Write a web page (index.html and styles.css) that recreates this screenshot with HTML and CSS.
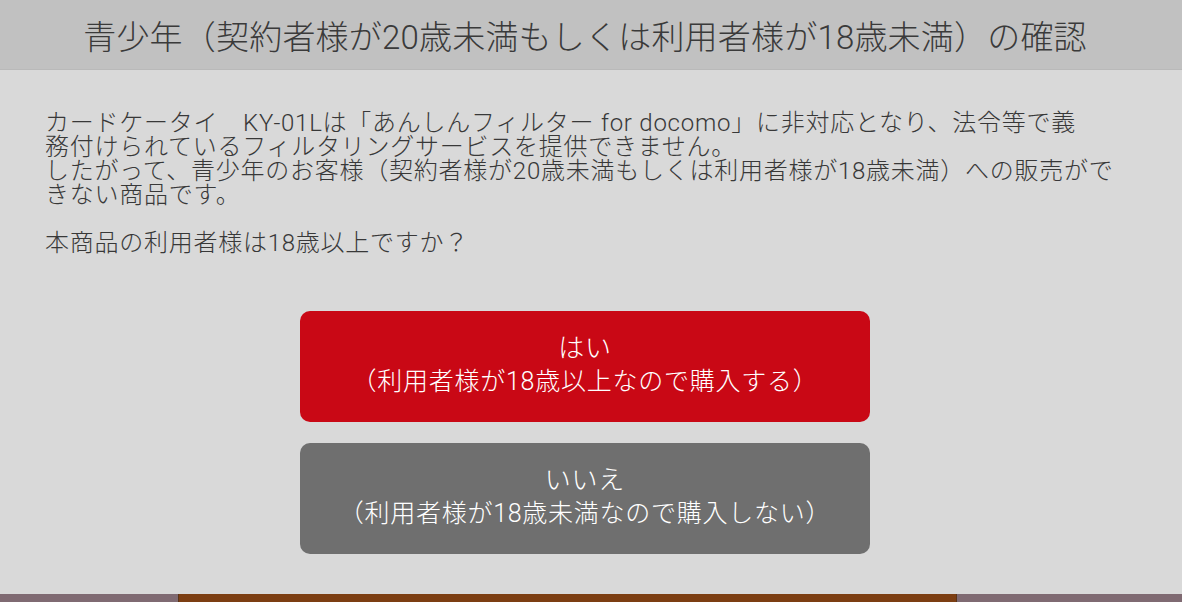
FILE: index.html
```html
<!DOCTYPE html>
<html lang="ja">
<head>
    <meta charset="UTF-8">
    <meta name="viewport" content="width=device-width, initial-scale=1.0">
    <title>青少年の確認</title>
    <link rel="stylesheet" href="styles.css">
</head>
<body>

<div class="page">
    <header class="title-bar">
        <h1>青少年（契約者様が20歳未満もしくは利用者様が18歳未満）の確認</h1>
    </header>

    <main class="content">
        <!-- 改行位置は端末表示に合わせて固定 -->
        <p class="notice">カードケータイ　KY-01Lは「あんしんフィルター for docomo」に非対応となり、法令等で義<br>務付けられているフィルタリングサービスを提供できません。<br>したがって、青少年のお客様（契約者様が20歳未満もしくは利用者様が18歳未満）への販売がで<br>きない商品です。</p>
        <p class="notice">本商品の利用者様は18歳以上ですか？</p>

        <div class="choices">
            <button class="choice choice-yes">
                <span class="choice-main">はい</span>
                <span class="choice-sub">（利用者様が18歳以上なので購入する）</span>
            </button>
            <button class="choice choice-no">
                <span class="choice-main">いいえ</span>
                <span class="choice-sub">（利用者様が18歳未満なので購入しない）</span>
            </button>
        </div>
    </main>

    <footer class="bottom-bar">
        <div class="bottom-tab"></div>
    </footer>
</div>

</body>
</html>
```

FILE: styles.css
```css
body {
    margin: 0;
    padding: 0;
    background-color: #d9d9d9;
    color: #383838;
    font-family: Roboto, "Noto Sans CJK JP", sans-serif;
    font-weight: 300;
}

.page {
    display: flex;
    flex-direction: column;
    height: 100vh;
}

.title-bar {
    background-color: #c1c1c1;
    border-bottom: 1px solid #b9b9b9;
    height: 69px;
    padding-right: 12px;
    display: flex;
    align-items: center;
    justify-content: center;
}

.title-bar h1 {
    margin: 0;
    font-size: 33px;
    font-weight: 300;
    color: #3a3a3a;
    letter-spacing: 0.2px;
}

.content {
    flex: 1;
    padding: 41px 57px 0 45px;
}

.notice {
    margin: 0 0 24px 0;
    font-size: 24px;
    line-height: 24px;
    letter-spacing: 0.75px;
    white-space: nowrap;
}

.choices {
    display: flex;
    flex-direction: column;
    align-items: center;
    gap: 21px;
    margin-top: 56px;
}

.choice {
    width: 570px;
    height: 111px;
    border: none;
    border-radius: 10px;
    color: #ffffff;
    font-family: inherit;
    font-weight: 300;
    display: flex;
    flex-direction: column;
    align-items: center;
    justify-content: center;
    padding: 0 0 4px 0;
    cursor: pointer;
}

.choice-yes {
    background-color: #c90815;
}

.choice-no {
    background-color: #6f6f6f;
}

.choice-main {
    font-size: 26px;
    line-height: 34px;
    letter-spacing: 0.75px;
}

.choice-sub {
    font-size: 25px;
    line-height: 34px;
    letter-spacing: 0.75px;
}

.bottom-bar {
    height: 8px;
    background-color: #7f6a72;
    display: flex;
    padding-left: 178px;
}

.bottom-tab {
    width: 777px;
    background-color: #7c3e12;
    border-left: 1px solid #5a3418;
    border-right: 1px solid #5a3418;
}
```
